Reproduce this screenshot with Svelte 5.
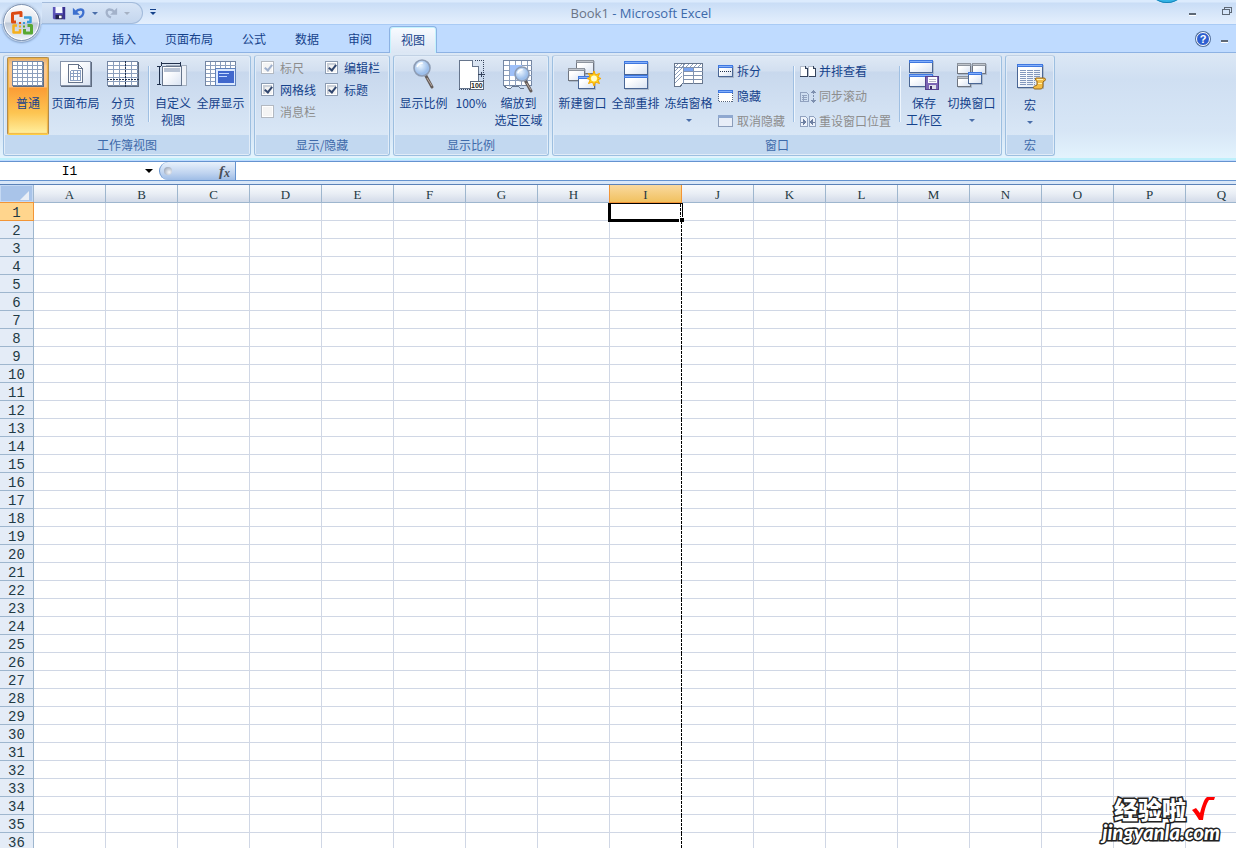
<script lang="ts">
  const tabs = ['开始', '插入', '页面布局', '公式', '数据', '审阅', '视图'];
  const columns = 'ABCDEFGHIJKLMNOPQ'.split('');
  const rows = Array.from({ length: 36 }, (_, i) => i + 1);

  const toggles = [
    { id: 'ruler', label: '标尺', checked: true, disabled: true },
    { id: 'formula', label: '编辑栏', checked: true, disabled: false },
    { id: 'gridlines', label: '网格线', checked: true, disabled: false },
    { id: 'headings', label: '标题', checked: true, disabled: false },
    { id: 'messages', label: '消息栏', checked: false, disabled: true },
  ];

  let activeTab = $state('视图');
  let selectedColumn = $state('I');
  let selectedRow = $state(1);
  let cellName = $derived(selectedColumn + selectedRow);
</script>

<!-- a small window: frame, title strip, body -->
{#snippet win(x: number, y: number, w: number, h: number, tone: string)}
  <rect x={x + 1} y={y + 1} width={w} height={h} fill="#8b97a8" opacity=".5" />
  <rect {x} {y} width={w} height={h} fill={tone === 'blue' ? '#4a6694' : '#6f7580'} />
  <rect x={x + 1} y={y + 1} width={w - 2} height={h - 2} fill="url(#paper)" />
  <rect {x} {y} width={w} height="3" fill={tone === 'blue' ? '#3f78e0' : '#8d949e'} />
  <rect x={x + 1} y={y + 1} width={w - 2} height="1" fill={tone === 'blue' ? '#86b0fa' : '#c0c5cc'} />
{/snippet}

{#snippet grid(x: number, y: number, w: number, h: number, dx: number, dy: number)}
  <rect {x} {y} width={w} height={h} fill="#fff" stroke="#7486a3" />
  {#each Array(Math.ceil(w / dx) - 1) as _, i}
    <path d={`M${x + (i + 1) * dx} ${y}v${h}`} stroke="#8c9fbd" />
  {/each}
  {#each Array(Math.ceil(h / dy) - 1) as _, i}
    <path d={`M${x} ${y + (i + 1) * dy}h${w}`} stroke="#8c9fbd" />
  {/each}
{/snippet}

{#snippet lens(x: number, y: number, r: number)}
  <g shape-rendering="auto">
    <path d={`M${x + r * 0.5} ${y + r}L${x + r + 2} ${y + r * 2 + 3}`} stroke="#655d5a" stroke-width="3" stroke-linecap="round" />
    <path d={`M${x + r * 0.5 + 1} ${y + r + 2}L${x + r + 2} ${y + r * 2 + 2}`} stroke="#b9aaa2" stroke-width="1" />
    <circle cx={x} cy={y} {r} fill="url(#glass)" stroke="#8d9cb4" stroke-width="1.6" />
    <path d={`M${x - r * 0.6} ${y - r * 0.1}a${r * 0.6} ${r * 0.6} 0 0 1 ${r * 0.7} ${-r * 0.5}`} fill="none" stroke="#fff" stroke-width="1.6" />
  </g>
{/snippet}

{#snippet icon(name: string)}
  <svg class="icon" viewBox="0 0 32 32" fill="none" shape-rendering="crispEdges" aria-hidden="true">
    {#if name === 'normal'}
      {@render grid(0.5, 2.5, 30, 24, 5, 4)}
      <path d="M1 27.500h31M31.500 3v25" stroke="#5f6c80" />
    {:else if name === 'layout'}
      <rect x=".5" y="2.500" width="30" height="24" fill="url(#paper)" stroke="#8593aa" />
      <path d="M1 27.500h31M31.500 3v25" stroke="#5f6c80" />
      <path d="M8.500 5.500h10l4 4v14h-14z" fill="#fff" stroke="#65738a" />
      <path d="M18.500 5.500v4h4" stroke="#65738a" />
      <path d="M10.500 12v9.500h10V11.500h-10M10 14.500h10M10 17.500h10M13.500 12v9M17.500 12v9" stroke="#8ba0c2" />
    {:else if name === 'breaks'}
      {@render grid(0.5, 2.5, 30, 24, 6, 4)}
      <path d="M1 27.500h31M31.500 3v25" stroke="#5f6c80" />
      <path d="M18.500 2v26M0 20.500h32" stroke="#20304c" stroke-dasharray="2 1" />
    {:else if name === 'custom'}
      <rect x="9.500" y="6.500" width="20" height="20" fill="#eef2f8" stroke="#a1adbd" />
      <rect x="5.500" y="7.500" width="19" height="19" fill="url(#paper)" stroke="#66758c" />
      <rect x="7" y="9" width="16" height="4" fill="#b8c3d4" />
      <path d="M4.500 3v4M23.500 3v4M5 4.500h18M0 7.500h4M0 25.500h4M2.500 8v18" stroke="#20304c" />
    {:else if name === 'full'}
      {@render grid(0.5, 2.5, 30, 24, 5, 4)}
      <rect x="10.500" y="9.500" width="20" height="17" fill="#dbe9ff" stroke="#6082bb" />
      <rect x="13" y="12" width="16" height="12" fill="#4168cd" />
      <path d="M14 14.500h10M14 17.500h8" stroke="#c4d8ff" />
    {:else if name === 'zoom'}
      {@render lens(14, 9, 8)}
    {:else if name === 'hundred'}
      <path d="M4.500 1.500h13l6 6v22h-19z" fill="#fff" stroke="#66758c" />
      <path d="M17.500 1.500v6h6" fill="#dbe4f1" stroke="#66758c" />
      <path d="M20 1.500h8.500V29M4 30.500h14" stroke="#33415a" stroke-dasharray="1 1" />
      <path d="M23 15.500h7M26.500 13v5" stroke="#33415a" />
      <rect x="15.500" y="22.500" width="13" height="8" fill="#fff" stroke="#58657a" />
      <text x="16" y="29" font-size="7" font-weight="bold" fill="#222" font-family="Liberation Sans, sans-serif">100</text>
    {:else if name === 'selection'}
      {@render grid(0.5, 1.5, 28, 25, 6, 5)}
      <path d="M7 6h12v11H7z" fill="#9fc0f8" />
      <path d="M1 27l3 2h4l2-2h5l2 2h4" fill="#fff" stroke="#66758c" />
      {@render lens(19, 15, 7)}
    {:else if name === 'new'}
      {@render win(9, 1, 18, 14, 'grey')}
      {@render win(1, 9, 17, 13, 'grey')}
      {@render win(11, 17, 17, 13, 'blue')}
      <path d="M27 12l1.500 4 4-1.500-1.700 3.700 3.200 1.300-3.200 1.300 1.700 3.700-4-1.500-1.500 4-1.500-4-4 1.500 1.700-3.700-3.200-1.300 3.200-1.300-1.700-3.700 4 1.500z" fill="#ffd21c" stroke="#f6a800" shape-rendering="auto" />
      <circle cx="27" cy="19.500" r="3" fill="#fffcc8" shape-rendering="auto" />
    {:else if name === 'arrange'}
      {@render win(4, 2, 24, 14, 'blue')}
      {@render win(4, 16, 24, 14, 'blue')}
    {:else if name === 'freeze'}
      <rect x="1.500" y="4.500" width="28" height="20" fill="#fff" stroke="#66758c" />
      <path d="M1.500 24v3h6l2-2.500" fill="#fff" stroke="#66758c" />
      <path d="M2 8l3-3M2 12l7-7M2 16l7-7M2 20l7-7M2 24l7-7M9 8l3-3M13 8l3-3M17 8l3-3M21 8l3-3M25 8l3-3" stroke="#8da0bd" />
      <rect x="11" y="9" width="9" height="4" fill="#7ba4f0" />
      <path d="M10.500 5v20M2 8.500h28M11 12.500h19M11 16.500h19M11 20.500h19M20.500 9v16" stroke="#8193b0" />
    {:else if name === 'save'}
      {@render win(1, 1, 24, 13, 'blue')}
      {@render win(1, 15, 24, 13, 'blue')}
      <path d="M17.500 17.500h13v13h-13z" fill="#7c66b4" stroke="#54418c" />
      <rect x="20" y="18" width="9" height="6" fill="#fff" />
      <path d="M21 20.500h7M21 22.500h7" stroke="#b6b6c6" />
      <path d="M21 26h7v4h-7z" fill="#dfdfea" /><path d="M22 27h2v3h-2z" fill="#3b2c66" />
    {:else if name === 'switch'}
      {@render win(1, 4, 14, 11, 'grey')}
      {@render win(16, 4, 14, 11, 'grey')}
      {@render win(1, 17, 14, 11, 'grey')}
      {@render win(12, 13, 14, 12, 'blue')}
    {:else}
      {@render win(3, 3, 26, 24, 'blue')}
      <path d="M6 9.500h20M6 11.500h20M6 13.500h20M6 15.500h20M6 17.500h20M6 19.500h15M6 21.500h15M6 23.500h15" stroke="#8398bd" stroke-dasharray="6 1" />
      <path d="M22 17h8c2 0 2 3 0 3l-1 1v4c0 2-1 3-3 3h-5c-2 0-2-3 0-3l2-1v-4c-2 0-2-3-1-3z" fill="#f3bd45" stroke="#96671a" shape-rendering="auto" />
      <path d="M23 18.500h6M24 22.500h4" stroke="#fff0b0" />
    {/if}
  </svg>
{/snippet}

{#snippet smallIcon(name: string)}
  <svg class="small-icon" viewBox="0 0 16 16" fill="none" shape-rendering="crispEdges" aria-hidden="true">
    {#if name === 'split'}
      {@render win(0, 2, 15, 12, 'blue')}
      <path d="M2 8.500h11" stroke="#20304c" stroke-dasharray="1 1" />
    {:else if name === 'hide'}
      <rect x=".5" y="2.500" width="14" height="11" fill="#fff" stroke="#55647c" stroke-dasharray="1 1" />
      <path d="M0 2h15v3H0z" fill="#3f78e0" /><path d="M1 3.500h13" stroke="#86b0fa" />
    {:else if name === 'unhide'}
      <rect x=".5" y="2.500" width="14" height="11" fill="#e8eef8" stroke="#8b9dba" />
      <path d="M0 2h15v3H0z" fill="#8fa8d0" />
    {:else if name === 'side'}
      <path d="M.5 3.500h4l3 2v8h-7zM8.500 3.500h4l3 2v8h-7z" fill="#fff" stroke="#b3bdcc" />
      <path d="M0 13.500h7.500V5M5.500 3v2.500H8M9 13.500h6.500V5M13.500 3v2.500H15" stroke="#34425a" />
    {:else if name === 'sync'}
      <path d="M.5 4.500h6l2 2v7h-8zM2 7.500h5M2 9.500h5M2 11.500h5M3.500 7v6" stroke="#91a2bf" />
      <path d="M13.500 4v9" stroke="#7e90af" stroke-dasharray="2 1" />
      <path d="M11 5l2.500-3L16 5zM11 12l2.500 3 2.500-3z" fill="#7e90af" />
    {:else}
      <path d="M.5 3.500h5l2 2v8h-7zM9.500 3.500h4l2 2v8h-6z" fill="#edf2fa" stroke="#91a2bf" />
      <path d="M1 9h3M12 9h3" stroke="#6d7fa1" />
      <path d="M3 6l4 3-4 3zM13 6l-4 3 4 3z" fill="#6d7fa1" />
    {/if}
  </svg>
{/snippet}

{#snippet big(name: string, lines: string[], extra = '', menu = false)}
  <button class={`big ${extra}`}>
    {@render icon(name)}
    {#each lines as line}<span>{line}</span>{/each}
    {#if menu}<i class="caret"></i>{/if}
  </button>
{/snippet}

{#snippet small(name: string, label: string, disabled = false)}
  <button class="small" {disabled}>{@render smallIcon(name)}<span>{label}</span></button>
{/snippet}

<div class="app">
  <svg class="defs" width="0" height="0" aria-hidden="true">
    <linearGradient id="paper" x1="0" y1="0" x2="1" y2="1"><stop offset=".3" stop-color="#fff" /><stop offset="1" stop-color="#d9e3f2" /></linearGradient>
    <radialGradient id="glass" cx=".4" cy=".35"><stop offset="0" stop-color="#eaf5ff" /><stop offset="1" stop-color="#9dbfeb" /></radialGradient>
  </svg>

  <header class="title-bar">
    <button class="office" aria-label="Office">
      <svg viewBox="0 0 24 24" fill="none" stroke-width="3" stroke-linejoin="round" aria-hidden="true">
        <path d="M6 11H2.500V2.500L11 1.500V6" stroke="#dc4a12" />
        <path d="M14 6.500h6.500V11H17" stroke="#3a9bdc" stroke-width="2.500" />
        <path d="M7 14.500H3.500v7H10V18" stroke="#f5b01c" stroke-width="2.500" />
        <path d="M17.500 14.500h4V22h-7v-4" stroke="#58a832" />
        <path d="M9 11h2v2H9z" fill="#dc4a12" /><path d="M13 11h2v2h-2z" fill="#3a9bdc" />
        <path d="M9 14.500h2v2H9z" fill="#f5b01c" /><path d="M13 14.500h2v2h-2z" fill="#58a832" />
      </svg>
    </button>
    <div class="quick">
      <button aria-label="保存">
        <svg viewBox="0 0 16 16" aria-hidden="true">
          <path d="M1 1h14v14H2l-1-1z" fill="#5b53b8" /><path d="M4 1h8v7H4z" fill="#f4f7ff" /><path d="M12 1h3v14h-2z" fill="#38308f" />
          <path d="M4 10h8v5H4z" fill="#23234c" /><path d="M8 11h3v3H8z" fill="#fff" />
        </svg>
      </button>
      <button aria-label="撤消">
        <svg viewBox="0 0 16 16" fill="none" aria-hidden="true"><path d="M4 7c3-4 9-4 9 0 0 3-2 5-5 6" stroke="#3d70cf" stroke-width="2.600" /><path d="M1 2v8h8z" fill="#3d70cf" /></svg>
      </button>
      <i class="caret"></i>
      <button aria-label="恢复" disabled>
        <svg viewBox="0 0 16 16" fill="none" aria-hidden="true"><path d="M12 7C9 3 3 3 3 7c0 3 2 5 5 6" stroke="#a3b2ca" stroke-width="2.600" /><path d="M15 2v8H7z" fill="#a3b2ca" /></svg>
      </button>
      <i class="caret dim"></i>
    </div>
    <button class="customize" aria-label="自定义快速访问工具栏"><i class="caret"></i></button>
    <h1><span>Book1</span> - Microsoft Excel</h1>
    <div class="window-buttons">
      <button aria-label="最小化"><i class="dash"></i></button>
      <button aria-label="还原">
        <svg width="10" height="10" viewBox="0 0 10 10" fill="none" shape-rendering="crispEdges" aria-hidden="true"><path d="M2.500 3V1.500h7v5H8M.5 3.500h7v5h-7z" stroke="#5d6876" /><path d="M2 1.500h8M0 3.500h8" stroke="#5d6876" /></svg>
      </button>
    </div>
    <span class="bubble"></span>
  </header>

  <nav class="tabs">
    {#each tabs as tab}
      <button class="tab" class:active={tab === activeTab} onclick={() => (activeTab = tab)}>{tab}</button>
    {/each}
    <div class="tab-tools">
      <button class="help" aria-label="帮助">?</button>
      <button aria-label="最小化工作簿"><i class="dash"></i></button>
    </div>
  </nav>

  <div class="ribbon">
    <section class="group">
      <div class="body">
        {@render big('normal', ['普通'], 'narrow pressed')}
        {@render big('layout', ['页面布局'])}
        {@render big('breaks', ['分页', '预览'], 'narrow')}
        <i class="rule"></i>
        {@render big('custom', ['自定义', '视图'], 'narrow')}
        {@render big('full', ['全屏显示'])}
      </div>
      <h2>工作簿视图</h2>
    </section>

    <section class="group">
      <div class="checks">
        {#each toggles as t}
          <label for={t.id} class:off={t.disabled}>
            <input id={t.id} type="checkbox" checked={t.checked} disabled={t.disabled} />{t.label}
          </label>
        {/each}
      </div>
      <h2>显示/隐藏</h2>
    </section>

    <section class="group">
      <div class="body">
        {@render big('zoom', ['显示比例'])}
        {@render big('hundred', ['100%'], 'narrow')}
        {@render big('selection', ['缩放到', '选定区域'])}
      </div>
      <h2>显示比例</h2>
    </section>

    <section class="group">
      <div class="body">
        {@render big('new', ['新建窗口'])}
        {@render big('arrange', ['全部重排'])}
        {@render big('freeze', ['冻结窗格'], '', true)}
        <div class="stack">
          {@render small('split', '拆分')}
          {@render small('hide', '隐藏')}
          {@render small('unhide', '取消隐藏', true)}
        </div>
        <i class="rule"></i>
        <div class="stack">
          {@render small('side', '并排查看')}
          {@render small('sync', '同步滚动', true)}
          {@render small('reset', '重设窗口位置', true)}
        </div>
        <i class="rule"></i>
        {@render big('save', ['保存', '工作区'], 'narrow')}
        {@render big('switch', ['切换窗口'], '', true)}
      </div>
      <h2>窗口</h2>
    </section>

    <section class="group">
      <div class="body">
        {@render big('macro', ['宏'], 'narrow low', true)}
      </div>
      <h2>宏</h2>
    </section>
  </div>

  <div class="formula-bar">
    <div class="name">
      <input aria-label="名称框" value={cellName} />
      <i class="caret black"></i>
    </div>
    <div class="fx-area"><div class="fx-pill"><i class="knob"></i><button class="fx" aria-label="插入函数">f<sub>x</sub></button></div></div>
    <input class="formula" aria-label="编辑栏" />
  </div>

  <main class="sheet">
    <table>
      <colgroup>
        <col class="head-col" />
        {#each columns as c (c)}<col class="data-col" />{/each}
      </colgroup>
      <thead>
        <tr>
          <th class="corner" aria-label="全选"><svg viewBox="0 0 10 10" aria-hidden="true"><path d="M10 0v10H0z" fill="#e9eef6" /></svg></th>
          {#each columns as c}<th scope="col" class:current={c === selectedColumn}>{c}</th>{/each}
        </tr>
      </thead>
      <tbody>
        {#each rows as r}
          <tr>
            <th scope="row" class:current={r === selectedRow}>{r}</th>
            {#each columns as c}
              <td class:page-break={c === 'I'} onclick={() => { selectedColumn = c; selectedRow = r; }}>
                {#if c === selectedColumn && r === selectedRow}<div class="selection"></div>{/if}
              </td>
            {/each}
          </tr>
        {/each}
      </tbody>
    </table>
  </main>

  <div class="watermark">
    <p class="cn">经验啦
      <svg viewBox="0 0 24 24" aria-hidden="true"><path d="M1 13l4-2 4 5C11 9 13 2 16 0h8l-1 3h-5C15 7 13 15 12 23H8C6 20 4 16 1 13z" fill="#f00" /></svg>
    </p>
    <p class="url">jingyanla.com</p>
  </div>
</div>

<style>
  :global(body) { margin: 0; background: #fff; }
  .app {
    position: relative;
    display: flex;
    flex-direction: column;
    height: 100vh;
    overflow: hidden;
    font: 12px/17px "Noto Sans CJK SC", sans-serif;
    color: #15428b;
    background: #bfdbff;
  }
  .defs { position: absolute; }
  button { padding: 0; border: 0; background: none; font: inherit; color: inherit; }
  i { display: block; }
  .caret { width: 0; height: 0; border: 3px solid transparent; border-top-color: #4a6ea9; border-bottom: 0; }
  .caret.dim { border-top-color: #a5b1c3; }
  .caret.black { border-width: 4px; border-bottom: 0; border-top-color: #000; }
  .dash { width: 7px; height: 2px; background: #5d6876; border-bottom: 1px solid #fff; }

  /* title bar */
  .title-bar {
    position: relative;
    flex: none;
    display: flex;
    align-items: center;
    box-sizing: border-box;
    height: 25px;
    padding-left: 42px;
    border-bottom: 1px solid #a9cbf5;
    background: linear-gradient(#dcebfd 0 2px, #c9ddf6 3px, #d5e5f9 50%, #e4effd);
  }
  .office {
    position: absolute;
    z-index: 2;
    left: 3px;
    top: 4px;
    width: 37px;
    height: 37px;
    border: 1px solid #7e92b0;
    border-radius: 50%;
    background: linear-gradient(#fdfdfe, #dfe4ec 48%, #bfc9d8 52%, #eef3fa);
    box-shadow: inset 0 0 0 1px #fff, 0 0 0 1px #c4d4e9, 0 1px 2px 1px #7f9cc4;
  }
  .office svg { display: block; width: 24px; height: 24px; margin: 0 auto; }
  .quick {
    display: flex;
    align-items: center;
    gap: 6px;
    box-sizing: border-box;
    height: 22px;
    margin-top: 2px;
    padding: 0 12px 0 10px;
    border: 1px solid #a3bbdb;
    border-left: 0;
    border-radius: 0 11px 11px 0;
    background: linear-gradient(#d8e5f6, #c4d6ee);
  }
  .quick svg { display: block; width: 14px; height: 14px; }
  .customize { margin-left: 7px; padding-top: 3px; }
  .customize .caret { border-top-color: #15428b; position: relative; }
  .customize .caret::before { content: ""; position: absolute; left: -3px; top: -6px; width: 6px; height: 1px; background: #15428b; }
  h1 { position: absolute; inset: 0; margin: 0; padding-left: 46px; font: 13px/27px "Open Sans", sans-serif; text-align: center; color: #3e6aaa; pointer-events: none; white-space: pre; }
  h1 span { color: #6a7486; }
  .window-buttons { display: flex; align-items: center; gap: 26px; margin-left: auto; padding-right: 4px; }
  .window-buttons button:first-child { padding-top: 4px; }
  .window-buttons button:last-child { padding-bottom: 2px; }
  .window-buttons svg { display: block; }
  .bubble { position: absolute; top: -37px; right: 49px; width: 40px; height: 40px; border-radius: 50%; background: #35b4e6; box-shadow: inset 0 -1px #1583b8; clip-path: inset(37px 0 0); }

  /* tabs */
  .tabs { flex: none; display: flex; align-items: flex-end; gap: 5px; height: 27px; padding-left: 47px; border-bottom: 1px solid #8db2e3; }
  .tab { box-sizing: border-box; height: 26px; padding: 0 11px 2px; border: 1px solid transparent; border-bottom: 0; border-radius: 4px 4px 0 0; }
  .tab.active { height: 27px; margin-bottom: -1px; border-color: #8db2e3; background: linear-gradient(#f8fbff, #dbe6f4); box-shadow: inset 1px 1px #c3f3fd, inset -1px 0 #c3f3fd; }
  .tab-tools { display: flex; align-items: center; gap: 11px; margin-left: auto; padding: 0 8px 6px 0; }
  .help { width: 14px; height: 14px; border: 1px solid #fff; border-radius: 50%; background: #2e5fd0; box-shadow: 0 0 0 1px #54719c; color: #fff; font: bold 11px/12px "Liberation Sans", sans-serif; }
  .tab-tools .dash { margin-top: 5px; }

  /* ribbon */
  .ribbon {
    flex: none;
    display: flex;
    gap: 3px;
    padding: 2px 2px 2px 3px;
    border-bottom: 2px solid #bdf0fb;
    background: linear-gradient(#dce8f5, #cfdff2 25%, #d7e6f6 75%, #e3f3fd);
  }
  .group {
    display: flex;
    flex-direction: column;
    border: 1px solid #9dbfe0;
    border-top-color: #c1d1e4;
    border-radius: 3px;
    background: linear-gradient(#dfe9f5, #d2dff0 15px, #c8d8ed 16px, #d9e7f6 80px);
    box-shadow: inset 0 0 0 1px #e1ecf8;
    box-sizing: border-box;
    height: 101px;
  }
  .body { display: flex; flex: 1; padding: 1px 3px 0; }
  h2 { margin: 0 1px 1px; font-size: 12px; font-weight: 400; line-height: 19px; text-align: center; color: #3e6aaa; background: #c2d8f0; }
  .big { display: flex; flex-direction: column; align-items: center; width: 53px; height: 78px; padding-top: 2px; white-space: nowrap; line-height: 17px; }
  .big.narrow { width: 42px; }
  .big .caret { margin-top: 8px; }
  .big.low { padding-top: 4px; }
  .icon { display: block; flex: none; width: 32px; height: 32px; margin-bottom: 3px; overflow: visible; }
  .pressed {
    box-sizing: border-box;
    height: 78px;
    padding-top: 1px;
    border: 1px solid #b18b4c;
    border-bottom-color: #ffcf42;
    border-radius: 2px;
    background: linear-gradient(#e0ad78, #fbc98f 8px, #fdc184 29px, #fb9c35 30px, #fdc552 55px, #fff0a0);
    box-shadow: inset 0 0 1px 1px #f2b544;
  }
  .rule { width: 1px; height: 56px; margin: 9px 2px 0 4px; background: #9fbfe2; border-right: 1px solid #eef5fd; }
  .stack { display: flex; flex-direction: column; padding: 1px 4px 0 3px; }
  .small { display: flex; align-items: center; gap: 3px; height: 25px; white-space: nowrap; }
  .small:disabled, .off { color: #8d8d8d; }
  .small-icon { width: 16px; height: 16px; overflow: visible; }

  .checks { flex: 1; display: grid; grid-template-columns: 64px 58px; grid-auto-rows: 22px; padding: 0 6px; }
  label { display: flex; align-items: center; gap: 6px; white-space: nowrap; }
  .checks input { appearance: none; position: relative; box-sizing: border-box; width: 13px; height: 13px; margin: 0; border: 1px solid #8d9db3; background: #f4f4f4; box-shadow: inset 0 0 0 1px #fff, inset 2px 2px 1px 1px #c9cfd8; }
  .checks input:checked::after { content: ""; position: absolute; left: 4px; top: 1px; width: 3px; height: 6px; border: solid #31476f; border-width: 0 2px 2px 0; transform: rotate(38deg); }
  .checks input:disabled { border-color: #b3b9c1; box-shadow: inset 0 0 0 1px #fff; }
  .checks input:disabled::after { border-color: #9fb0cc; }

  /* formula bar */
  .formula-bar { flex: none; display: flex; height: 18px; border: solid #6593cf; border-width: 1px 0; margin-top: 1px; background: #fff; box-shadow: 0 3px #d9e7f8, 0 4px #5b82b8; }
  .name { display: flex; align-items: center; width: 159px; }
  .name input { flex: 1; min-width: 0; padding: 2px 7px 0 1px; border: 0; outline: 0; background: none; text-align: center; font: 13px/16px "Liberation Mono", monospace; color: #000; }
  .name .caret { margin-right: 6px; }
  .fx-area { display: flex; width: 76px; border-right: 1px solid #6593cf; }
  .fx-pill { flex: 1; display: flex; align-items: center; justify-content: space-between; padding: 0 5px 0 4px; border-left: 1px solid #6593cf; border-radius: 9px 0 0 9px; background: linear-gradient(#e9f1fb, #c0d4f0 60%, #9fbde6); }
  .knob { width: 8px; height: 8px; border-radius: 50%; background: radial-gradient(circle at 65% 65%, #f5f7fa, #8694aa); }
  .fx { font: italic bold 15px/15px "Liberation Serif", serif; color: #4a4f58; }
  .fx sub { font-size: 12px; line-height: 0; vertical-align: -1px; }
  .formula { flex: 1; min-width: 0; padding: 0 4px; border: 0; outline: 0; font: 13px/16px "Liberation Mono", monospace; }

  /* sheet */
  .sheet { flex: 1; min-height: 0; margin-top: 4px; overflow: hidden; background: #fff; }
  table { width: max-content; table-layout: fixed; border-spacing: 0; }
  .head-col { width: 34px; }
  .data-col { width: 72px; }
  th, td { box-sizing: border-box; height: 18px; padding: 0; border: solid #d0d7e5; border-width: 0 1px 1px 0; }
  th { padding-top: 2px; border-color: #9eb6ce; font: 13px/15px "Liberation Serif", serif; color: #1f3a44; }
  thead th { min-width: 72px; background: linear-gradient(#f8fafd, #e9eef5 50%, #d3dbe9); }
  tbody th { background: #e4ecf7; font: 14px/14px "Liberation Mono", monospace; padding-top: 3px; }
  thead .corner { min-width: 34px; width: 34px; padding: 0; background: #a9c4e9; box-shadow: inset 0 0 0 1px #c5d9f3; }
  .corner svg { display: block; width: 9px; height: 9px; margin: 3px 4px 0 auto; }
  thead .current { background: linear-gradient(#f9d99f, #f1c15f); border-color: #f29536; box-shadow: -1px 0 #f29536; }
  tbody .current { background: #ffd58d; border-color: #f29536; box-shadow: 0 -1px #f29536; }
  td { position: relative; cursor: cell; }
  .page-break { border-right: 0; }
  .page-break::after { content: ""; position: absolute; right: 0; top: 0; width: 1px; height: 18px; background: repeating-linear-gradient(#000 0 3px, #fff 3px 4px); z-index: 1; }
  .selection { position: absolute; z-index: 2; inset: 0 -1px -2px -2px; border: solid #000; border-width: 1px 1px 3px 3px; box-shadow: inset -1px 0 #fff; }
  .selection::before { content: ""; position: absolute; right: 1px; top: 0; bottom: 0; border-right: 1px dashed #000; }
  .selection::after { content: ""; position: absolute; right: -2px; bottom: -3px; width: 4px; height: 4px; background: #000; border: solid #fff; border-width: 1px 0 0 1px; }

  /* watermark */
  .watermark { position: absolute; z-index: 3; right: 16px; bottom: 5px; color: #fff; font-weight: 900; -webkit-text-stroke: 3px #222; paint-order: stroke fill; pointer-events: none; }
  .watermark p { margin: 0; }
  .cn { display: flex; gap: 5px; justify-content: flex-end; align-items: flex-start; padding-right: 5px; font-size: 24px; line-height: 24px; }
  .cn svg { width: 24px; height: 24px; }
  .url { font: italic 900 20px/22px "Lato", sans-serif; }
</style>
